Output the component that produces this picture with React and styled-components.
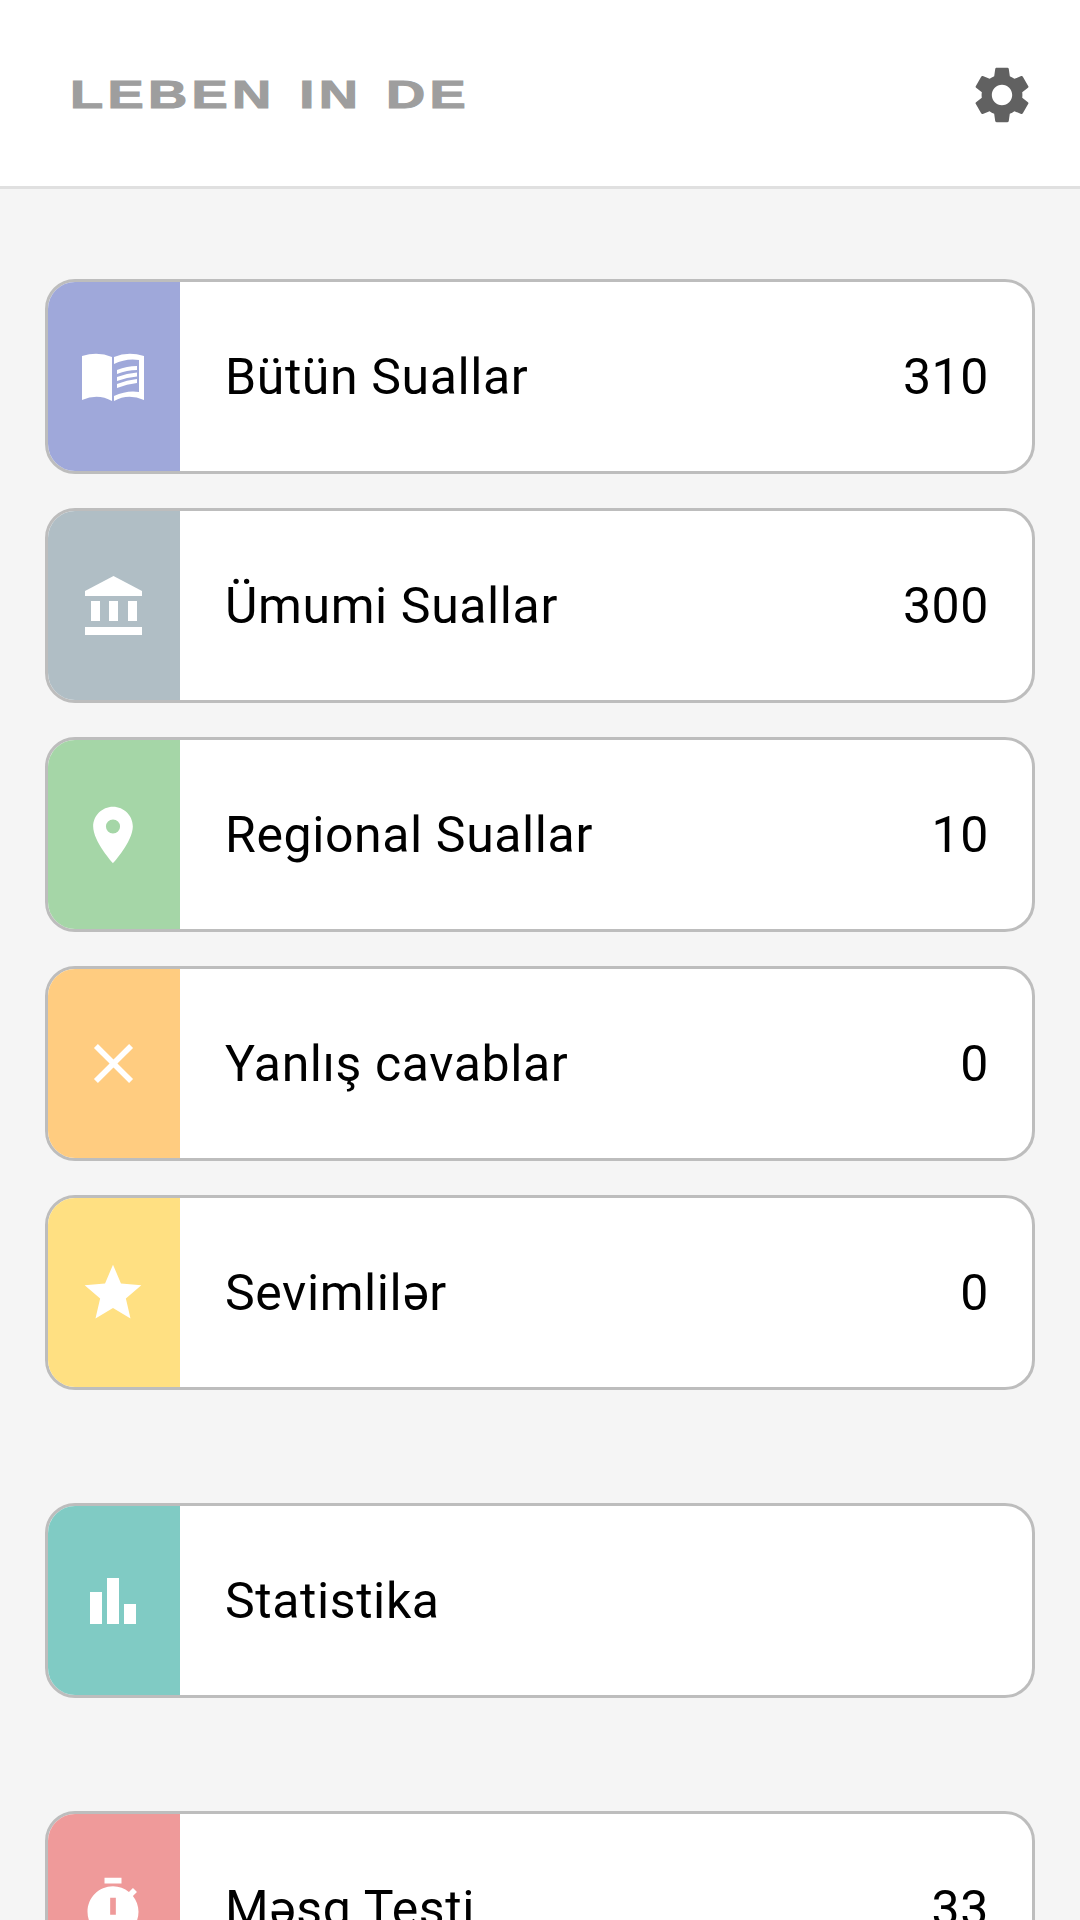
import styled, { createGlobalStyle } from "styled-components";
import { MdSettings, MdPlace, MdClose, MdStar } from "react-icons/md";

const GlobalStyle = createGlobalStyle`
  html, body {
    margin: 0;
    padding: 0;
    height: 1920px;
    overflow: hidden;
    background: #f5f5f5;
    font-family: Roboto, "Noto Sans", sans-serif;
  }
`;

function BookIcon() {
  return (
    <svg width="62" height="48" viewBox="0 0 62 48" fill="#fff">
      <path d="M0 3Q16 -2 30 4V48Q16 40 0 47Z" />
      <path
        fillRule="evenodd"
        d="M32 4Q46 -2 62 3V47Q46 40 32 48ZM32 11V43Q45 37 57 39V7Q44 5 32 11Z"
      />
      <path d="M35 17Q45 13 55 13V17Q45 17 35 21ZM35 24Q45 20 55 19.5V23.5Q45 24 35 28ZM35 31Q45 27 55 26V30Q45 31 35 35Z" />
    </svg>
  );
}

function BankIcon() {
  return (
    <svg width="57" height="59" viewBox="0 0 57 59" fill="#fff">
      <path d="M28.5 0L57 15V20H0V15Z" />
      <rect x="6" y="25" width="9" height="20" />
      <rect x="24" y="25" width="9" height="20" />
      <rect x="43" y="25" width="9" height="20" />
      <rect x="0" y="51" width="57" height="8" />
    </svg>
  );
}

function BarsIcon() {
  return (
    <svg width="46" height="46" viewBox="0 0 46 46" fill="#fff">
      <rect x="0" y="14" width="12" height="32" />
      <rect x="17" y="0" width="12" height="46" />
      <rect x="34" y="26" width="12" height="20" />
    </svg>
  );
}

function StopwatchIcon() {
  return (
    <svg width="68" height="68" viewBox="0 0 24 24" fill="#fff">
      <path
        fillRule="evenodd"
        d="M9 1h6v2H9zM19.03 7.39l1.42-1.42c-.43-.51-.9-.99-1.41-1.41l-1.42 1.42C16.07 4.74 14.12 4 12 4c-4.97 0-9 4.03-9 9s4.02 9 9 9 9-4.03 9-9c0-2.12-.74-4.07-1.97-5.61zM11 8h2v6h-2z"
      />
    </svg>
  );
}

const groups = [
  [
    { label: "Bütün Suallar", count: 310, color: "#9fa8da", icon: <BookIcon /> },
    { label: "Ümumi Suallar", count: 300, color: "#b0bec5", icon: <BankIcon /> },
    { label: "Regional Suallar", count: 10, color: "#a5d6a7", icon: <MdPlace size={68} /> },
    { label: "Yanlış cavablar", count: 0, color: "#ffcc80", icon: <MdClose size={67} /> },
    { label: "Sevimlilər", count: 0, color: "#ffe082", icon: <MdStar size={68} /> },
  ],
  [{ label: "Statistika", color: "#80cbc4", icon: <BarsIcon /> }],
  [{ label: "Məşq Testi", count: 33, color: "#ef9a9a", icon: <StopwatchIcon /> }],
];

export default function App() {
  return (
    <>
      <GlobalStyle />
      <Header>
        <Logo>LEBEN IN DE</Logo>
        <SettingsIcon size={68} />
      </Header>
      <Main>
        {groups.map((group, index) => (
          <Group key={index}>
            {group.map((item) => (
              <Card key={item.label}>
                <IconPanel $color={item.color}>{item.icon}</IconPanel>
                <Label>{item.label}</Label>
                <Count>{item.count}</Count>
              </Card>
            ))}
          </Group>
        ))}
      </Main>
    </>
  );
}

const Header = styled.header`
  display: flex;
  align-items: center;
  justify-content: space-between;
  box-sizing: border-box;
  height: 189px;
  padding: 3px 44px 0 70px;
  background: #fff;
  border-bottom: 3px solid #e0e0e0;
`;

const Logo = styled.div`
  font-family: "Liberation Sans", Arial, sans-serif;
  font-weight: 700;
  font-size: 38px;
  line-height: 1;
  letter-spacing: 3px;
  word-spacing: 3px;
  white-space: pre;
  color: #9e9e9e;
  -webkit-text-stroke: 1px #9e9e9e;
  transform: scaleX(1.43);
  transform-origin: left center;
`;

const SettingsIcon = styled(MdSettings)`
  color: #616161;
`;

const Main = styled.main`
  display: flex;
  flex-direction: column;
  gap: 113px;
  padding: 90px 45px 0;
`;

const Group = styled.section`
  display: flex;
  flex-direction: column;
  gap: 34px;
`;

const Card = styled.div`
  display: flex;
  align-items: center;
  flex: none;
  box-sizing: border-box;
  height: 195px;
  background: #fff;
  border: 3px solid #bdbdbd;
  border-radius: 30px;
  overflow: hidden;
`;

const IconPanel = styled.div`
  display: flex;
  align-items: center;
  justify-content: center;
  flex: none;
  align-self: stretch;
  box-sizing: border-box;
  width: 132px;
  padding-right: 2px;
  color: #fff;
  background: ${(props) => props.$color};
`;

const Label = styled.span`
  flex: 1;
  padding-left: 45px;
  font-size: 50px;
  letter-spacing: 0.6px;
  color: #000;
`;

const Count = styled.span`
  padding-right: 43px;
  font-size: 50px;
  letter-spacing: 0.6px;
  color: #000;
`;
